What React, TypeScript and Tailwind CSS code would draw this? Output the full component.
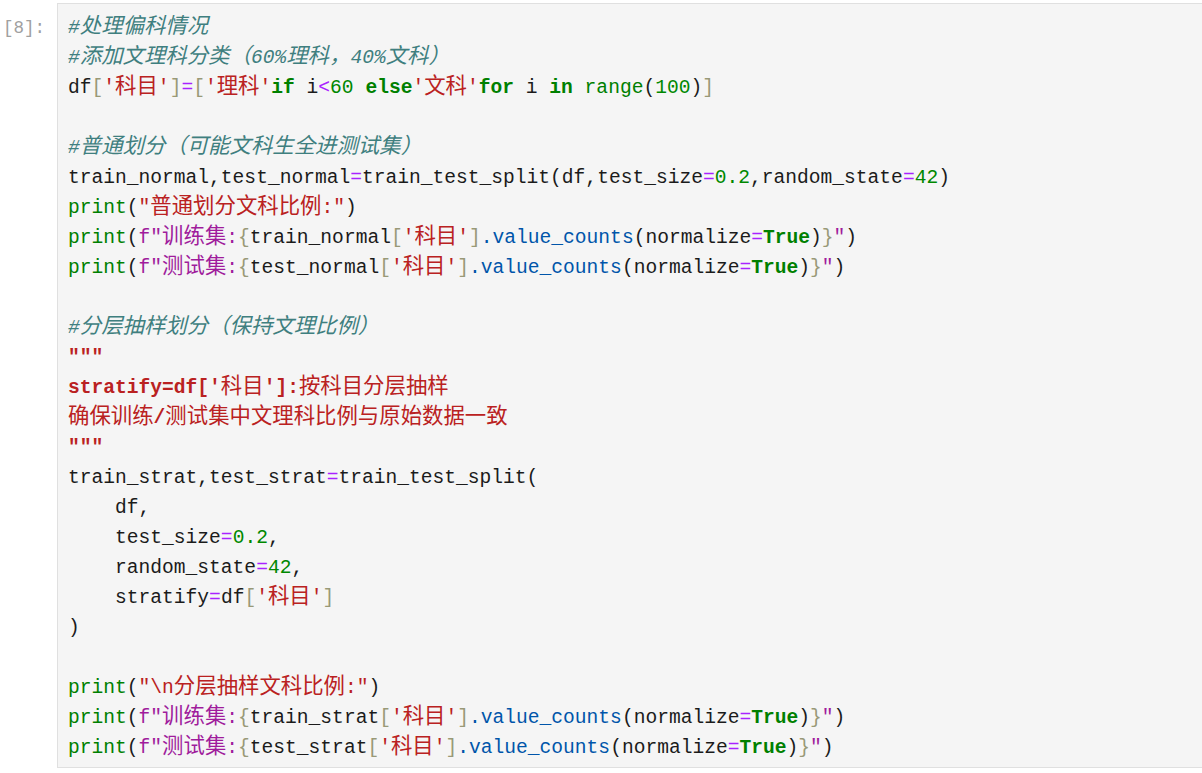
import React from 'react';

type Tok = [string, string];

// syntax colours, roughly JupyterLab's light theme
const C = {
  txt: 'text-[#1b1b1b]',
  com: 'text-[#3f7f7f] italic',
  kw: 'text-[#008000] font-bold',
  bi: 'text-[#008000]',
  num: 'text-[#008800]',
  op: 'text-[#aa22ff]',
  str: 'text-[#ba2121]',
  doc: 'text-[#ba2121] font-bold',
  fs: 'text-[#a01c9c]',
  br: 'text-[#999977]',
  prop: 'text-[#0055aa]',
};

const LINES: Tok[][] = [
  [[C.com, '#处理偏科情况']],
  [[C.com, '#添加文理科分类（60%理科，40%文科）']],
  [
    [C.txt, 'df'], [C.br, '['], [C.str, "'科目'"], [C.br, ']'], [C.op, '='], [C.br, '['],
    [C.str, "'理科'"], [C.kw, 'if'], [C.txt, ' i'], [C.op, '<'], [C.num, '60'], [C.txt, ' '],
    [C.kw, 'else'], [C.str, "'文科'"], [C.kw, 'for'], [C.txt, ' i '], [C.kw, 'in'], [C.txt, ' '],
    [C.bi, 'range'], [C.txt, '('], [C.num, '100'], [C.txt, ')'], [C.br, ']'],
  ],
  [],
  [[C.com, '#普通划分（可能文科生全进测试集）']],
  [
    [C.txt, 'train_normal,test_normal'], [C.op, '='], [C.txt, 'train_test_split(df,test_size'],
    [C.op, '='], [C.num, '0.2'], [C.txt, ',random_state'], [C.op, '='], [C.num, '42'], [C.txt, ')'],
  ],
  [[C.bi, 'print'], [C.txt, '('], [C.str, '"普通划分文科比例:"'], [C.txt, ')']],
  [
    [C.bi, 'print'], [C.txt, '('], [C.fs, 'f"训练集:'], [C.br, '{'], [C.txt, 'train_normal'],
    [C.br, '['], [C.str, "'科目'"], [C.br, ']'], [C.prop, '.value_counts'], [C.txt, '(normalize'],
    [C.op, '='], [C.kw, 'True'], [C.txt, ')'], [C.br, '}'], [C.fs, '"'], [C.txt, ')'],
  ],
  [
    [C.bi, 'print'], [C.txt, '('], [C.fs, 'f"测试集:'], [C.br, '{'], [C.txt, 'test_normal'],
    [C.br, '['], [C.str, "'科目'"], [C.br, ']'], [C.prop, '.value_counts'], [C.txt, '(normalize'],
    [C.op, '='], [C.kw, 'True'], [C.txt, ')'], [C.br, '}'], [C.fs, '"'], [C.txt, ')'],
  ],
  [],
  [[C.com, '#分层抽样划分（保持文理比例）']],
  [[C.doc, '"""']],
  [[C.doc, "stratify=df['科目']:按科目分层抽样"]],
  [[C.doc, '确保训练/测试集中文理科比例与原始数据一致']],
  [[C.doc, '"""']],
  [[C.txt, 'train_strat,test_strat'], [C.op, '='], [C.txt, 'train_test_split(']],
  [[C.txt, '    df,']],
  [[C.txt, '    test_size'], [C.op, '='], [C.num, '0.2'], [C.txt, ',']],
  [[C.txt, '    random_state'], [C.op, '='], [C.num, '42'], [C.txt, ',']],
  [[C.txt, '    stratify'], [C.op, '='], [C.txt, 'df'], [C.br, '['], [C.str, "'科目'"], [C.br, ']']],
  [[C.txt, ')']],
  [],
  [[C.bi, 'print'], [C.txt, '('], [C.str, '"\\n分层抽样文科比例:"'], [C.txt, ')']],
  [
    [C.bi, 'print'], [C.txt, '('], [C.fs, 'f"训练集:'], [C.br, '{'], [C.txt, 'train_strat'],
    [C.br, '['], [C.str, "'科目'"], [C.br, ']'], [C.prop, '.value_counts'], [C.txt, '(normalize'],
    [C.op, '='], [C.kw, 'True'], [C.txt, ')'], [C.br, '}'], [C.fs, '"'], [C.txt, ')'],
  ],
  [
    [C.bi, 'print'], [C.txt, '('], [C.fs, 'f"测试集:'], [C.br, '{'], [C.txt, 'test_strat'],
    [C.br, '['], [C.str, "'科目'"], [C.br, ']'], [C.prop, '.value_counts'], [C.txt, '(normalize'],
    [C.op, '='], [C.kw, 'True'], [C.txt, ')'], [C.br, '}'], [C.fs, '"'], [C.txt, ')'],
  ],
];

const CJK = /([\u3000-\u9fff\uff00-\uffef]+)/;

// CJK glyphs are full-em wide in the original, latin is narrower
const Segment = ({ cls, text }: { cls: string; text: string }) => (
  <span className={cls}>
    {text.split(CJK).map((part, i) =>
      CJK.test(part) ? (
        <span key={i} className="text-[21.4px] leading-[16px] font-normal font-['Noto_Sans_CJK_SC',sans-serif]">
          {part}
        </span>
      ) : (
        part
      )
    )}
  </span>
);

const App: React.FC = () => {
  return (
    <div className="h-screen w-full overflow-hidden bg-white pt-[3px] flex font-['Liberation_Mono','Noto_Sans_CJK_SC',monospace]">
      <div className="w-[57px] shrink-0 pl-[3px] pt-[10px] text-[17.5px] leading-[30px] text-[#a0a0a0]">[8]:</div>
      <div className="flex-1 h-[765px] border-y border-l border-[#e0e0e0] bg-[#f5f5f5] pl-[10px] pt-[9px] pb-[4px]">
        {LINES.map((line, i) => (
          <div key={i} className="h-[30px] leading-[30px] text-[19.6px] whitespace-pre">
            {line.map(([cls, text], j) => (
              <Segment key={j} cls={cls} text={text} />
            ))}
          </div>
        ))}
      </div>
    </div>
  );
};

export default App;
